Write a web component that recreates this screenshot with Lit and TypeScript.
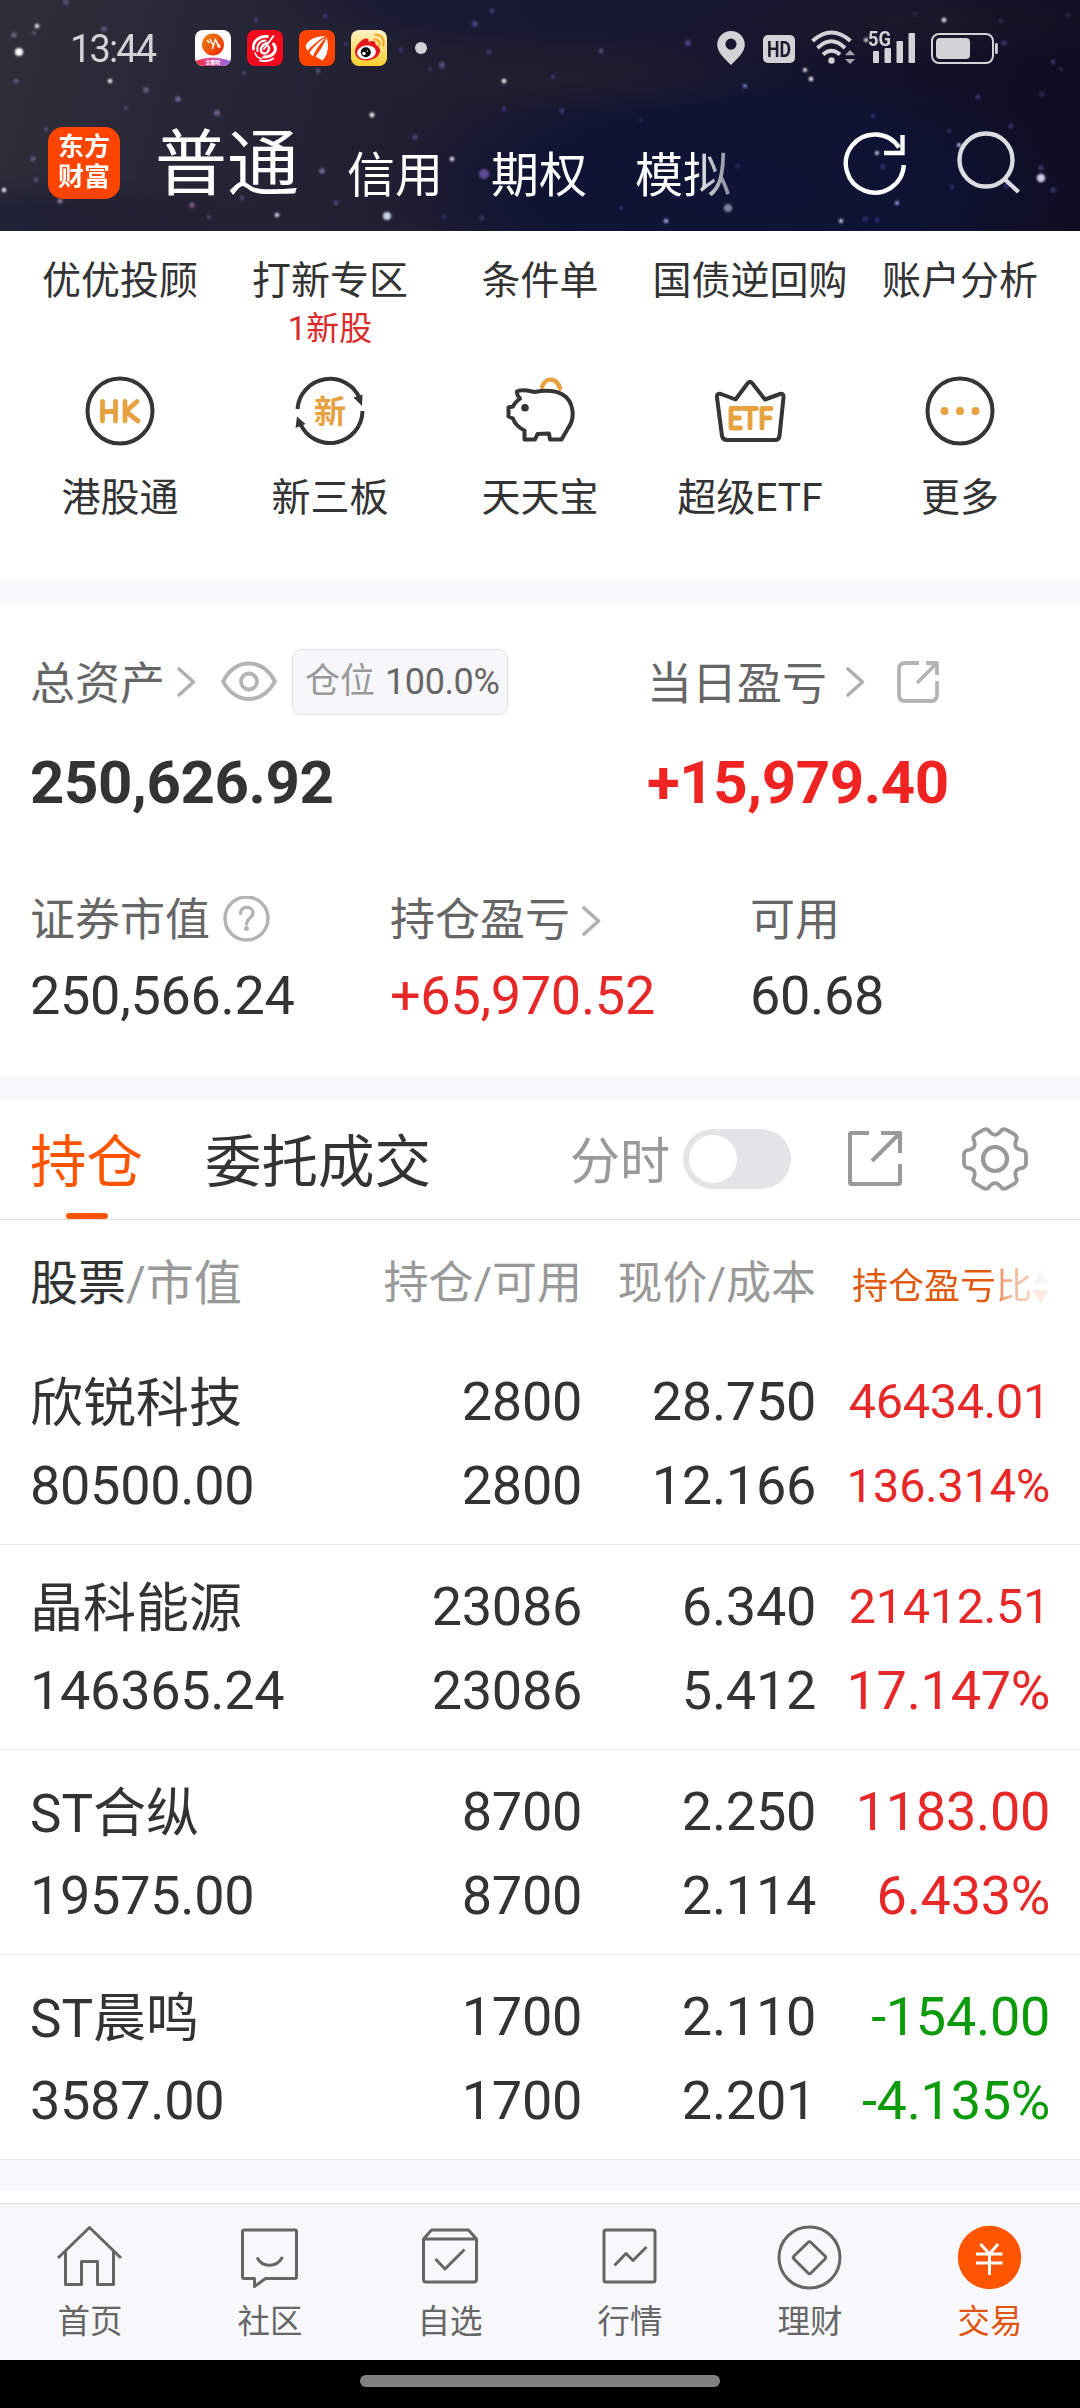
import { LitElement, html, css, svg, nothing } from "lit";
import { customElement, property } from "lit/decorators.js";

const shared = css`
  :host {
    display: block;
    font-family: Roboto, "Noto Sans CJK SC", sans-serif;
    color: #333;
  }
  * {
    box-sizing: border-box;
  }
  svg {
    display: block;
    flex: none;
  }
`;

// x, y, radius, colour, opacity
const STARS: [number, number, number, string, number][] = [
  [19, 52, 4, "#ffffff", 1], [37, 26, 2.2, "#ffffff", 0.9], [14, 35, 2.5, "#8585a8", 0.7],
  [34, 33, 2, "#77779c", 0.6], [104, 29, 3, "#6d6a9c", 0.6], [66, 2, 3, "#6d6a9c", 0.6],
  [16, 81, 2.5, "#7b72a4", 0.6], [110, 81, 2.2, "#ffffff", 0.95], [146, 90, 3, "#7d7aa4", 0.6],
  [178, 99, 2.6, "#8d80bd", 0.8], [217, 113, 3, "#9277b4", 0.7], [126, 108, 2, "#6a6490", 0.6],
  [46, 129, 2, "#6b6799", 0.7], [4, 190, 2.2, "#ffffff", 0.95], [33, 159, 2.4, "#7a72b0", 0.7],
  [36, 180, 2.4, "#7c6194", 0.6], [60, 201, 2.6, "#a884a8", 0.8], [192, 205, 2.6, "#a57bb4", 0.7],
  [277, 215, 2.2, "#dfe2ff", 0.95], [242, 198, 2.2, "#6d63a0", 0.6], [209, 217, 2, "#6a689c", 0.6],
  [322, 171, 2.8, "#a384bf", 0.7], [336, 203, 2.4, "#6b63ab", 0.6], [387, 216, 4, "#cfe0fa", 0.95],
  [372, 115, 2.4, "#ffffff", 0.95], [415, 137, 2.6, "#5d5597", 0.7], [452, 159, 2.2, "#ffffff", 0.9],
  [484, 174, 5, "#6f55a8", 0.85], [504, 81, 2.3, "#ffffff", 0.95], [442, 65, 3, "#6a629f", 0.7],
  [475, 24, 3, "#5955a2", 0.7], [489, 52, 2.5, "#4a4488", 0.7], [492, 11, 2.4, "#4f4a91", 0.7],
  [504, 109, 2.2, "#443f8c", 0.7], [325, 16, 2.6, "#474392", 0.6], [256, 20, 2.4, "#4b4880", 0.7],
  [318, 71, 2.4, "#77749f", 0.6], [244, 73, 2, "#77749f", 0.5], [401, 50, 2.4, "#494590", 0.6],
  [346, 44, 2, "#4b4796", 0.6], [430, 69, 2, "#4e4a86", 0.6], [482, 218, 2.2, "#4c478c", 0.7],
  [444, 217, 2.4, "#363478", 0.7], [601, 51, 2.4, "#6c6794", 0.7], [688, 43, 2.8, "#6357a8", 0.8],
  [553, 77, 2.2, "#4a4690", 0.7], [562, 111, 2.4, "#4d4a9c", 0.7], [745, 86, 2.2, "#7583c4", 0.9],
  [805, 70, 2, "#ffffff", 0.95], [811, 79, 2.2, "#ffffff", 0.95], [944, 20, 2.2, "#ffffff", 0.95],
  [866, 40, 2, "#ffffff", 0.95], [978, 97, 2.4, "#41408c", 0.8], [1042, 94, 2.8, "#2f2d61", 0.8],
  [1053, 62, 2.4, "#4a4280", 0.7], [1004, 43, 2.8, "#49448a", 0.7], [1068, 15, 2.4, "#393560", 0.7],
  [1001, 21, 2.4, "#393560", 0.6], [1061, 69, 1.8, "#4a4565", 0.7], [873, 116, 2.2, "#3a398a", 0.8],
  [1011, 126, 2.8, "#3d3a78", 0.7], [949, 131, 2.2, "#3f3c7a", 0.7], [959, 145, 2, "#dcdcff", 0.9],
  [877, 153, 2, "#ffffff", 0.85], [883, 167, 3, "#38357e", 0.7], [1041, 178, 4.2, "#d9d9f2", 0.95],
  [1041, 168, 2.8, "#4d4984", 0.7], [1053, 190, 2.8, "#45427d", 0.7], [952, 187, 2.4, "#3d3a80", 0.7],
  [1006, 186, 3, "#2f2d70", 0.8], [897, 203, 2.2, "#8d9be8", 0.95], [841, 221, 2.2, "#cbd0e8", 0.9],
  [865, 219, 3, "#2d2c6c", 0.8], [877, 220, 2.4, "#37368a", 0.8], [728, 208, 4, "#8f9bb3", 0.85],
  [666, 221, 2.3, "#aab6f5", 0.9], [621, 208, 2.2, "#2c3a80", 0.8], [738, 166, 2.6, "#26265e", 0.8],
  [641, 120, 2, "#252b66", 0.7], [915, 14, 3, "#2c2846", 0.8], [676, 196, 2.4, "#33336c", 0.6],
];

@customElement("night-sky")
class NightSky extends LitElement {
  static styles = [shared];
  render() {
    return html`<svg width="1080" height="231" viewBox="0 0 1080 231">
      <defs>
        <linearGradient id="base" x1="0" x2="1" y1="0" y2="0.06">
          <stop offset="0" stop-color="#2f2f3b" />
          <stop offset="0.22" stop-color="#272636" />
          <stop offset="0.46" stop-color="#1e1d31" />
          <stop offset="0.7" stop-color="#15152f" />
          <stop offset="1" stop-color="#0f0d22" />
        </linearGradient>
        <radialGradient id="navy"><stop offset="0" stop-color="#0f1335" /><stop offset="0.55" stop-color="#0e1334" stop-opacity="0.9" /><stop offset="1" stop-color="#0d1334" stop-opacity="0" /></radialGradient>
        <radialGradient id="dusk"><stop offset="0" stop-color="#24212e" stop-opacity="0.9" /><stop offset="1" stop-color="#24212e" stop-opacity="0" /></radialGradient>
        <filter id="soft" x="-100%" y="-100%" width="300%" height="300%"><feGaussianBlur stdDeviation="0.8" /></filter>
      </defs>
      <rect width="1080" height="231" fill="url(#base)" />
      <ellipse cx="740" cy="190" rx="350" ry="130" fill="url(#navy)" />
      <ellipse cx="520" cy="0" rx="260" ry="50" fill="url(#navy)" opacity="0.45" />
      <ellipse cx="20" cy="250" rx="260" ry="80" fill="url(#navy)" opacity="0.45" />
      <ellipse cx="560" cy="78" rx="240" ry="36" fill="url(#dusk)" opacity="0.7" />
      <ellipse cx="900" cy="20" rx="260" ry="46" fill="url(#dusk)" opacity="0.5" />
      <ellipse cx="200" cy="212" rx="200" ry="30" fill="url(#dusk)" opacity="0.8" />
      <g filter="url(#soft)">
        ${STARS.map(([x, y, r, c, o]) => svg`<circle cx=${x} cy=${y} r=${r} fill=${c} opacity=${o} />`)}
      </g>
    </svg>`;
  }
}

@customElement("status-bar")
class StatusBar extends LitElement {
  static styles = [
    shared,
    css`
      .bar { display: flex; align-items: center; height: 96px; padding: 0 82px 0 70px; }
      .time { width: 125px; font-size: 38px; line-height: 40px; letter-spacing: -1.9px; color: #d2d2d7; padding-top: 2px; }
      .apps { display: flex; gap: 16px; align-items: center; }
      .dot { width: 12px; height: 12px; border-radius: 50%; background: #d2d2d7; margin-left: 12px; }
      .sys { margin-left: auto; overflow: visible; }
    `,
  ];
  render() {
    return html`<div class="bar">
      <div class="time">13:44</div>
      <div class="apps">
        <svg width="36" height="36" viewBox="0 0 36 36">
          <defs>
            <clipPath id="c1"><rect width="36" height="36" rx="8" /></clipPath>
            <linearGradient id="g1" x1="0" y1="0" x2="1" y2="1"><stop offset="0" stop-color="#f08a10" /><stop offset="1" stop-color="#ee2205" /></linearGradient>
            <linearGradient id="g2"><stop offset="0" stop-color="#f02d3c" /><stop offset="0.5" stop-color="#d9509c" /><stop offset="1" stop-color="#8a6cf0" /></linearGradient>
          </defs>
          <g clip-path="url(#c1)">
            <rect width="36" height="36" fill="#fff" />
            <circle cx="18" cy="14.5" r="11" fill="url(#g1)" />
            <path d="M0 31Q18 24 36 31V36H0Z" fill="url(#g2)" />
            <text x="18" y="34" font-size="5" font-weight="700" fill="#fff" text-anchor="middle">全都听</text>
          </g>
          <path d="M12.500 10.500l1.500 2M15 9.500l2.800 5M20.600 9l-3.200 9.500M21.400 11l2 6M23.500 14.500l1.500 2.500" stroke="#fff" stroke-width="1.5" stroke-linecap="round" />
        </svg>
        <svg width="36" height="36" viewBox="0 0 36 36">
          <rect width="36" height="36" rx="8" fill="#f30a1c" />
          <g fill="none" stroke="#fff" stroke-linecap="round">
            <path d="M6.500 19C5.500 11 12 6 20.500 6.500" stroke-width="2.800" />
            <path d="M8 23C9.500 27 12 28.500 15 28.500" stroke-width="1.500" />
            <path d="M10.500 21C9.500 15 13 10.500 18.500 10.500" stroke-width="2" />
            <path d="M20.500 13C15 14 12 20 15.500 23C19 25 23.500 20.500 21.500 16.500" stroke-width="2.400" />
            <path d="M26.500 14C31 20 27 26.500 17 27" stroke-width="3" />
            <path d="M26.500 6L17 19" stroke-width="1.800" />
            <path d="M13 30.500C18 31.500 23 31 26 28.500" stroke-width="2" />
          </g>
        </svg>
        <svg width="36" height="36" viewBox="0 0 36 36">
          <rect width="36" height="36" rx="8" fill="#ff4400" />
          <g fill="#fff">
            <path d="M26.500 6C17 6 9 9.500 6.500 16L8.500 20.800C12.500 16 19 10.500 26.500 6Z" />
            <path d="M27 7.300C20 11.500 14.500 16.500 10.500 22.500L13.500 26.500C17 19.500 21.500 13 27 7.300Z" />
            <path d="M27.600 7.800C24.500 15 21 21 16.500 26.500L23.500 30.500C29.500 24.500 30 15 27.600 7.800Z" />
          </g>
        </svg>
        <svg width="36" height="36" viewBox="0 0 36 36">
          <defs><linearGradient id="g3" x1="0" y1="0" x2="0" y2="1"><stop offset="0" stop-color="#fdf0c4" /><stop offset="1" stop-color="#ffcf2e" /></linearGradient></defs>
          <rect width="36" height="36" rx="8" fill="url(#g3)" />
          <path d="M4 22C4 16 10 9.500 14.500 8.500C17.500 8 18 10 17.500 12C21 10.500 25 10.500 24.500 14.500C28 16 29.500 19 29 21.500C28 27 22 30.500 15.500 30.500C9 30.500 4 27 4 22Z" fill="#e5161c" />
          <ellipse cx="15.500" cy="22.300" rx="9.500" ry="6.800" fill="#fff" transform="rotate(-8 15.500 22.300)" />
          <circle cx="14.800" cy="22.300" r="5" fill="#000" />
          <circle cx="13" cy="23.500" r="1.800" fill="#fff" />
          <circle cx="16.500" cy="21" r="0.800" fill="#fff" />
          <path d="M23.500 9.500C27.500 9 29 12 28.200 15M24 4.800C31 4.500 34 10 32 15.500" fill="none" stroke="#f9a51f" stroke-width="2" stroke-linecap="round" />
        </svg>
        <span class="dot"></span>
      </div>
      <svg class="sys" width="282" height="48" viewBox="716 24 282 48">
        <g fill="#d2d2d7">
          <path fill-rule="evenodd" d="M731 31A13.800 13.800 0 0 0 717.200 44.800C717.200 52.500 725 59 731 65C737 59 744.800 52.500 744.800 44.800A13.800 13.800 0 0 0 731 31ZM731 38.500A5.600 5.600 0 1 1 731 49.700A5.600 5.600 0 1 1 731 38.500Z" />
          <rect x="763" y="35" width="32" height="28" rx="5" />
          <text x="779" y="57" font-size="22" font-weight="700" text-anchor="middle" fill="#1a1a2e" textLength="24" lengthAdjust="spacingAndGlyphs">HD</text>
          <circle cx="831.500" cy="60.500" r="3.200" />
          <rect x="873" y="51" width="6" height="12" rx="1" /><rect x="884.500" y="48" width="6.500" height="15" rx="1" />
          <rect x="896.500" y="41" width="6.500" height="22" rx="1" /><rect x="908.500" y="33" width="6.500" height="30" rx="1" />
          <text x="868" y="46" font-size="20" font-weight="700" textLength="23" lengthAdjust="spacingAndGlyphs">5G</text>
          <path d="M845 55.200L850 50L855.200 55.200ZM845 59L850 64L855.200 59Z" opacity="0.75" />
          <rect x="936" y="38" width="34" height="21" rx="4" />
          <rect x="995" y="43" width="2.800" height="11" rx="1.300" />
        </g>
        <g fill="none" stroke="#d2d2d7">
          <path d="M812.500 41Q831.500 24 850.500 41M817.500 48Q831.500 34.500 845 48M823 54.500Q831.500 47 840 54.500" stroke-width="4" />
          <rect x="932" y="34" width="61" height="29" rx="7" stroke-width="2" />
        </g>
      </svg>
    </div>`;
  }
}

@customElement("title-bar")
class TitleBar extends LitElement {
  static styles = [
    shared,
    css`
      .bar { display: flex; height: 135px; padding: 0 60px 0 48px; color: #fff; }
      .logo { width: 72px; height: 72px; margin-top: 31px; border-radius: 15px; background: #ff4400; display: flex; flex-direction: column; align-items: center; justify-content: center; font-weight: 700; font-size: 26px; line-height: 29.5px; padding-bottom: 1px; }
      .tabs { display: flex; align-items: flex-end; gap: 48px; margin-left: 35px; padding-bottom: 30px; white-space: nowrap; }
      .tab { font-size: 48px; line-height: 48px; margin-bottom: 1px; }
      .tab.main { font-size: 72px; line-height: 72px; margin-bottom: 0; }
      .fade { -webkit-mask-image: linear-gradient(90deg, #000 60%, rgba(0, 0, 0, 0.85) 70%, rgba(0, 0, 0, 0.5) 100%); mask-image: linear-gradient(90deg, #000 60%, rgba(0, 0, 0, 0.85) 70%, rgba(0, 0, 0, 0.5) 100%); }
      .tools { margin: 34px 0 0 auto; }
    `,
  ];
  render() {
    return html`<div class="bar">
      <div class="logo"><span>东方</span><span>财富</span></div>
      <div class="tabs">
        <span class="tab main">普通</span><span class="tab">信用</span><span class="tab">期权</span><span class="tab fade">模拟</span>
      </div>
      <svg class="tools" width="178" height="66" viewBox="843 130 178 66" fill="none" stroke-width="4.400">
        <path d="M904.800 165A29 29 0 1 1 900 147.500" stroke="#fff" />
        <path d="M903.500 135V153H885" stroke="#fff" />
        <circle cx="987" cy="160" r="26.500" stroke="#dcdce2" />
        <path d="M1005 178.500L1019.500 192" stroke="#dcdce2" />
      </svg>
    </div>`;
  }
}

const D = "#353535";
const O = "#e6a140";
const quickIcons: Record<string, unknown> = {
  hk: svg`<circle cx="35" cy="35" r="32.500" fill="none" stroke=${D} stroke-width="4" />
    <path d="M17.500 25.500V45M30.500 25.500V45M17.500 35.500H30.500M40 25.500V45M52 25.500L41 35.500L53 45" fill="none" stroke=${O} stroke-width="4.800" stroke-linecap="round" stroke-linejoin="round" />`,
  neeq: svg`<path d="M2.500 33A32.500 32.500 0 0 1 65 23M67.500 35A32.500 32.500 0 0 1 5 47" fill="none" stroke=${D} stroke-width="4" />
    <path d="M58.500 21.500L67.500 18.500L67 30ZM0.500 52L2 40.500L10.500 48Z" fill=${D} />
    <text x="35" y="47" font-size="32" font-weight="700" text-anchor="middle" fill=${O}>新</text>`,
  pig: svg`<path d="M37 11C40 1 52 1 55 12.500" fill="none" stroke=${O} stroke-width="4.400" stroke-linecap="round" />
    <path d="M7.500 16C12 13 20 15.500 25 16.500C36 14.500 47 15.500 53 19C65 26 65.500 43 59 52L52 64H40.500L39.500 58L28 58.500L25.500 64H15V55C9 52 5 48 3.500 43L-1 41V32L3.500 31C5 27.500 8 25 10.500 23C8.500 21 7 18.500 7.500 16Z" transform="translate(4.500 -0.500)" fill="none" stroke=${D} stroke-width="4" stroke-linejoin="round" />
    <circle cx="20" cy="31.700" r="3.800" fill=${D} />`,
  etf: svg`<path d="M2 21.500Q1.500 17 6 18L20.500 23.500L32.500 7.500Q35 4 37.500 7.500L50 23.500L65 18Q69 17 68.500 21.500L64.500 60Q64 64 60 64H12Q8 64 7 60Z" fill="none" stroke=${D} stroke-width="4" stroke-linejoin="round" />
    <path d="M25.500 32.500H16V52H25.500M16 42H24.500M28.500 32.500H41.500M35 32.500V52M56 32.500H47V52M47 42H55" fill="none" stroke=${O} stroke-width="4.800" stroke-linecap="round" stroke-linejoin="round" />`,
  more: svg`<circle cx="35" cy="35" r="32.500" fill="none" stroke=${D} stroke-width="4" />
    <circle cx="19.500" cy="35" r="4" fill=${O} /><circle cx="35" cy="35" r="4" fill=${O} /><circle cx="50.500" cy="35" r="4" fill=${O} />`,
};

@customElement("quick-menu")
class QuickMenu extends LitElement {
  static styles = [
    shared,
    css`
      .menu { height: 349px; padding: 29px 15px 0; background: #fff; }
      .row { display: grid; grid-template-columns: repeat(5, 210px); }
      .first { height: 116px; }
      .item { display: flex; flex-direction: column; align-items: center; white-space: nowrap; }
      .label { font-size: 39px; line-height: 42px; }
      .note { font-size: 33px; line-height: 34px; margin-top: 10px; color: #dc2b2b; }
      .item svg { margin-bottom: 31px; overflow: visible; }
    `,
  ];
  render() {
    const top: [string, string][] = [["优优投顾", ""], ["打新专区", "1新股"], ["条件单", ""], ["国债逆回购", ""], ["账户分析", ""]];
    const bottom = [["hk", "港股通"], ["neeq", "新三板"], ["pig", "天天宝"], ["etf", "超级ETF"], ["more", "更多"]];
    return html`<div class="menu">
      <div class="row first">
        ${top.map(([t, n]) => html`<div class="item"><span class="label">${t}</span>${n ? html`<span class="note">${n}</span>` : nothing}</div>`)}
      </div>
      <div class="row">
        ${bottom.map(([i, t]) => html`<div class="item"><svg width="70" height="70" viewBox="0 0 70 70">${quickIcons[i]}</svg><span class="label">${t}</span></div>`)}
      </div>
    </div>`;
  }
}

const chevron = html`<svg width="19" height="30" viewBox="0 0 19 30"><path d="M2 2L16.500 15L2 28" fill="none" stroke="#b0b0b0" stroke-width="3.600" stroke-linecap="round" stroke-linejoin="round" /></svg>`;

@customElement("asset-summary")
class AssetSummary extends LitElement {
  static styles = [
    shared,
    css`
      .card { height: 471px; padding: 45px 30px 0; background: #fff; }
      .top { display: grid; grid-template-columns: 617px 1fr; }
      .sub { display: grid; grid-template-columns: 360px 360px 1fr; margin-top: 80px; }
      .head { display: flex; align-items: center; height: 66px; }
      .sub .head { height: 50px; }
      .name { font-size: 45px; line-height: 50px; color: #666; white-space: nowrap; }
      .top .name { padding-top: 5px; }
      .gap-s { margin-left: 12px; }
      .gap-m { margin-left: 19px; }
      .eye { margin-left: 24px; }
      .share { margin-left: 31px; }
      .help { margin-left: 12px; margin-top: -2px; }
      .badge { margin-left: 14px; width: 216px; height: 66px; padding-left: 12px; border: 1px solid #e2e2e4; border-radius: 9px; background: #f7f7fa; display: flex; align-items: center; gap: 10px; font-size: 36px; line-height: 40px; letter-spacing: -0.4px; white-space: nowrap; color: #666; }
      .badge .muted { color: #999; font-size: 35px; letter-spacing: 0; }
      .big { font-size: 60px; line-height: 66px; font-weight: 700; margin-top: 35px; letter-spacing: -0.4px; }
      .val { font-size: 54px; line-height: 60px; margin-top: 20px; letter-spacing: -0.3px; }
      .up { color: #f02323; }
      .val.up { color: #e62828; }
    `,
  ];
  render() {
    return html`<div class="card">
      <div class="top">
        <div>
          <div class="head">
            <span class="name">总资产</span><span class="gap-s">${chevron}</span>
            <svg class="eye" width="58" height="42" viewBox="0 0 58 42" fill="none" stroke="#b4b4b4" stroke-width="3.800">
              <path d="M3 20.500C9 9 18 2.500 29 2.500S49 9 55 20.500C49 31 40 38 29 38S9 31 3 20.500Z" stroke-linejoin="round" /><circle cx="29" cy="20.500" r="8" />
            </svg>
            <div class="badge"><span class="muted">仓位</span><span>100.0%</span></div>
          </div>
          <div class="big">250,626.92</div>
        </div>
        <div>
          <div class="head">
            <span class="name">当日盈亏</span><span class="gap-m">${chevron}</span>
            <svg class="share" width="44" height="44" viewBox="0 0 44 44" fill="none" stroke="#b4b4b4" stroke-width="3.800" stroke-linejoin="round">
              <path d="M23 3H9Q3 3 3 9V35Q3 41 9 41H35Q41 41 41 35V21" /><path d="M30 3H41V15M40.500 3.500L21 23" />
            </svg>
          </div>
          <div class="big up">+15,979.40</div>
        </div>
      </div>
      <div class="sub">
        <div>
          <div class="head"><span class="name">证券市值</span>
            <svg class="help" width="49" height="49" viewBox="0 0 49 49" fill="none" stroke="#b4b4b4" stroke-width="3.400">
              <circle cx="24.500" cy="22.500" r="21.500" /><path d="M18.500 17.500C18.500 9 31 9.500 31 17C31 21.500 25 22 24.500 28" stroke-linecap="round" /><circle cx="24.500" cy="32.500" r="2.500" fill="#b4b4b4" stroke="none" />
            </svg>
          </div>
          <div class="val">250,566.24</div>
        </div>
        <div>
          <div class="head"><span class="name">持仓盈亏</span><span class="gap-s">${chevron}</span></div>
          <div class="val up">+65,970.52</div>
        </div>
        <div>
          <div class="head"><span class="name">可用</span></div>
          <div class="val">60.68</div>
        </div>
      </div>
    </div>`;
  }
}

/** Outline of a six-toothed cog centred on the origin. */
function cogPath(): string {
  const turn = (x: number, y: number, k: number) => {
    const a = (-k * Math.PI) / 3;
    return `${(x * Math.cos(a) - y * Math.sin(a)).toFixed(2)} ${(x * Math.sin(a) + y * Math.cos(a)).toFixed(2)}`;
  };
  let d = `M${turn(31, 5, 0)}`;
  for (let k = 0; k < 6; k++) {
    d += `L${turn(31, -5, k)}Q${turn(30.6, -7.6, k)} ${turn(28.6, -8.6, k)}`;
    d += `C${turn(20.5, -9.5, k)} ${turn(18.5, -13, k)} ${turn(28.6, 8.6, k + 1)}`;
    d += `Q${turn(30.6, 7.6, k + 1)} ${turn(31, 5, k + 1)}`;
  }
  return d + "Z";
}

@customElement("position-tabs")
class PositionTabs extends LitElement {
  static styles = [
    shared,
    css`
      .tabs { display: flex; align-items: center; height: 121px; padding: 0 50px 0 30px; background: #fff; border-bottom: 1px solid #dedede; white-space: nowrap; }
      .tab { position: relative; height: 120px; padding-top: 31px; font-size: 56.500px; line-height: 66px; }
      .on { color: #ff5500; width: 113px; }
      .on::after { content: ""; position: absolute; left: 36px; bottom: 0; width: 42px; height: 6px; border-radius: 3px; background: #ff5500; }
      .orders { margin-left: 62px; }
      .mode { margin-left: auto; padding-top: 5px; font-size: 50px; line-height: 56px; color: #999; }
      .switch { width: 108px; height: 60px; margin-left: 13px; border-radius: 30px; background: #e4e4e6; padding: 6px; }
      .knob { width: 48px; height: 48px; border-radius: 50%; background: #fff; }
      .share { margin-left: 56px; }
      .gear { margin-left: 57px; }
    `,
  ];
  render() {
    return html`<div class="tabs">
      <div class="tab on">持仓</div>
      <div class="tab orders">委托成交</div>
      <span class="mode">分时</span>
      <div class="switch"><div class="knob"></div></div>
      <svg class="share" width="56" height="56" viewBox="0 0 56 56" fill="none" stroke="#999" stroke-width="4" stroke-linejoin="round">
        <path d="M22 2H4Q3 2 3 3V51Q3 53 4.500 53H51.500Q53 53 53 51V33" /><path d="M34 2H53V22M52 3L25 30" />
      </svg>
      <svg class="gear" width="70" height="68" viewBox="-35 -34 70 68" fill="none" stroke="#999" stroke-width="3.800" stroke-linejoin="round">
        <path d="${cogPath()}" /><circle r="12" stroke-width="4.200" />
      </svg>
    </div>`;
  }
}

interface Holding {
  name: string; value: string; held: string; free: string; price: string; cost: string; gain: string; pct: string; down?: boolean;
}

@customElement("holdings-table")
class HoldingsTable extends LitElement {
  @property({ attribute: false }) rows: Holding[] = [];
  static styles = [
    shared,
    css`
      :host { background: #fff; }
      .head, .row { display: grid; grid-template-columns: 318px 234px 234px 234px; padding: 0 30px; white-space: nowrap; }
      .head { height: 120px; padding-top: 8px; align-items: center; font-size: 45px; line-height: 50px; color: #999; text-align: right; }
      .head .first { text-align: left; font-size: 48px; color: #999; }
      .first b { font-weight: 400; color: #333; }
      .sort { display: flex; justify-content: flex-end; align-items: center; padding-top: 5px; font-size: 36px; line-height: 40px; color: #e05a10; -webkit-mask-image: linear-gradient(90deg, #000 77%, rgba(0, 0, 0, 0.500) 80%, rgba(0, 0, 0, 0.300) 91%, rgba(0, 0, 0, 0.120) 94%); mask-image: linear-gradient(90deg, #000 77%, rgba(0, 0, 0, 0.500) 80%, rgba(0, 0, 0, 0.300) 91%, rgba(0, 0, 0, 0.120) 94%); }
      .row { height: 205px; padding-top: 20px; grid-template-rows: 84px 84px; border-bottom: 1px solid #ebebeb; font-size: 54px; line-height: 84px; letter-spacing: -0.3px; text-align: right; }
      .name { text-align: left; font-size: 53px; letter-spacing: 0; padding-top: 1.500px; }
      .left { text-align: left; }
      .up { color: #e62828; }
      .down { color: #0a9a0a; }
      .fit { font-size: 48.500px; }
      .fit2 { font-size: 46.700px; letter-spacing: -0.1px; }
    `,
  ];
  render() {
    return html`
      <div class="head">
        <span class="first"><b>股票</b>/市值</span><span>持仓/可用</span><span>现价/成本</span>
        <span class="sort">持仓盈亏比<svg width="18" height="36" viewBox="0 0 18 36"><path d="M1 15L9 1L17 15Z" fill="#bbb" /><path d="M1 21L9 35L17 21Z" fill="#ff5500" /></svg></span>
      </div>
      ${this.rows.map((r) => {
        const tone = r.down ? "down" : "up";
        return html`<div class="row">
          <span class="name">${r.name}</span><span>${r.held}</span><span>${r.price}</span><span class="${tone} ${r.gain.length > 7 ? "fit" : ""}">${r.gain}</span>
          <span class="left">${r.value}</span><span>${r.free}</span><span>${r.cost}</span><span class="${tone} ${r.pct.length > 7 ? "fit2" : ""}">${r.pct}</span>
        </div>`;
      })}
    `;
  }
}

const navIcons: Record<string, unknown> = {
  home: svg`<path d="M3.500 33.500L35 3L66.500 33.500M11 27V60H27V37H43V60H59V27" />`,
  chat: svg`<path d="M9.500 5.500H60.500Q62 5.500 62 7V52.500Q62 54 60.500 54H31L20 62V54H9.500Q8 54 8 52.500V7Q8 5.500 9.500 5.500Z" /><path d="M22.500 33C28 43.500 42 43.500 48 32.500" />`,
  box: svg`<path d="M9 14.500L17 5.500H54L62 14.500V55Q62 57.500 59.500 57.500H11.500Q9 57.500 9 55ZM9 14.500H62M21 34.500L30.500 44.500L50 25" />`,
  chart: svg`<rect x="9.500" y="5.500" width="51" height="52" rx="2" /><path d="M20 41L31.500 29L38.500 36L52 22.500" />`,
  wealth: svg`<circle cx="35" cy="33" r="30.500" /><path d="M33.500 18Q35 16.500 36.500 18L50.500 31.500Q52 33 50.500 34.500L36.500 48.500Q35 50 33.500 48.500L19.500 34.500Q18 33 19.500 31.500Z" />`,
  trade: svg`<circle cx="35" cy="33" r="31.700" fill="#ff5500" stroke="none" /><path d="M26 19.500L35 29.500L43.500 19.500M35 29V50.500M21.500 29.500H48M21.500 38.500H48" stroke="#fff" stroke-width="3" />`,
};

@customElement("bottom-nav")
class BottomNav extends LitElement {
  static styles = [
    shared,
    css`
      .nav { display: grid; grid-template-columns: repeat(6, 180px); height: 157px; padding-top: 20px; border-top: 1px solid #dedee0; background: #f8f8fb; }
      .item { display: flex; flex-direction: column; align-items: center; font-size: 32.500px; line-height: 36px; color: #666; }
      .item svg { margin-bottom: 13px; }
      .on { color: #e0550f; }
      .home { height: 48px; background: #000; padding-top: 15px; }
      .pill { width: 360px; height: 12px; margin: 0 auto; border-radius: 6px; background: #808080; }
    `,
  ];
  render() {
    const items = [["home", "首页"], ["chat", "社区"], ["box", "自选"], ["chart", "行情"], ["wealth", "理财"], ["trade", "交易"]];
    return html`<div class="nav">
        ${items.map(([i, t]) => html`<div class="item ${i === "trade" ? "on" : ""}">
          <svg width="70" height="67" viewBox="0.500 -0.500 70 67" fill="none" stroke="#666" stroke-width="3" stroke-linejoin="round">${navIcons[i]}</svg><span>${t}</span>
        </div>`)}
      </div>
      <div class="home"><div class="pill"></div></div>`;
  }
}

const HOLDINGS: Holding[] = [
  { name: "欣锐科技", value: "80500.00", held: "2800", free: "2800", price: "28.750", cost: "12.166", gain: "46434.01", pct: "136.314%" },
  { name: "晶科能源", value: "146365.24", held: "23086", free: "23086", price: "6.340", cost: "5.412", gain: "21412.51", pct: "17.147%" },
  { name: "ST合纵", value: "19575.00", held: "8700", free: "8700", price: "2.250", cost: "2.114", gain: "1183.00", pct: "6.433%" },
  { name: "ST晨鸣", value: "3587.00", held: "1700", free: "1700", price: "2.110", cost: "2.201", gain: "-154.00", pct: "-4.135%", down: true },
];

@customElement("app-root")
class AppRoot extends LitElement {
  static styles = [
    shared,
    css`
      :host { width: 1080px; height: 2408px; overflow: hidden; background: #fff; }
      .page { display: flex; flex-direction: column; height: 2408px; }
      .header { position: relative; height: 231px; background: #1b1a2d; }
      .sky { position: absolute; inset: 0; }
      .front { position: relative; }
      .band { height: 24px; background: #f7f8fa; }
      .tail { height: 30px; }
      .nav { margin-top: auto; }
    `,
  ];
  render() {
    return html`<div class="page">
      <div class="header">
        <night-sky class="sky"></night-sky>
        <div class="front"><status-bar></status-bar><title-bar></title-bar></div>
      </div>
      <quick-menu></quick-menu>
      <div class="band"></div>
      <asset-summary></asset-summary>
      <div class="band"></div>
      <position-tabs></position-tabs>
      <holdings-table .rows=${HOLDINGS}></holdings-table>
      <div class="band tail"></div>
      <bottom-nav class="nav"></bottom-nav>
    </div>`;
  }
}
